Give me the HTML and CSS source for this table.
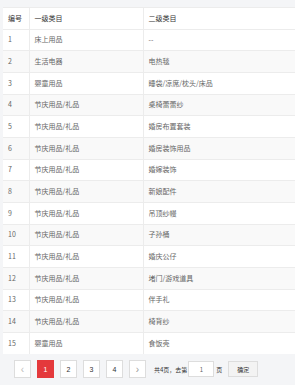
FILE: index.html
```html
<!DOCTYPE html>
<html lang="zh">
<head>
<meta charset="utf-8">
<link rel="stylesheet" href="styles.css">
</head>
<body>
<div class="page">
  <table class="grid">
    <colgroup><col class="c1"><col class="c2"><col class="c3"></colgroup>
    <thead>
      <tr><th>编号</th><th>一级类目</th><th>二级类目</th></tr>
    </thead>
    <tbody>
      <tr><td>1</td><td>床上用品</td><td>--</td></tr>
      <tr><td>2</td><td>生活电器</td><td>电热毯</td></tr>
      <tr><td>3</td><td>婴童用品</td><td>睡袋/凉席/枕头/床品</td></tr>
      <tr><td>4</td><td>节庆用品/礼品</td><td>桌椅蕾蕾纱</td></tr>
      <tr><td>5</td><td>节庆用品/礼品</td><td>婚房布置套装</td></tr>
      <tr><td>6</td><td>节庆用品/礼品</td><td>婚房装饰用品</td></tr>
      <tr><td>7</td><td>节庆用品/礼品</td><td>婚嫁装饰</td></tr>
      <tr><td>8</td><td>节庆用品/礼品</td><td>新娘配件</td></tr>
      <tr><td>9</td><td>节庆用品/礼品</td><td>吊顶纱幔</td></tr>
      <tr><td>10</td><td>节庆用品/礼品</td><td>子孙桶</td></tr>
      <tr><td>11</td><td>节庆用品/礼品</td><td>婚庆公仔</td></tr>
      <tr><td>12</td><td>节庆用品/礼品</td><td>堵门/游戏道具</td></tr>
      <tr><td>13</td><td>节庆用品/礼品</td><td>伴手礼</td></tr>
      <tr><td>14</td><td>节庆用品/礼品</td><td>椅背纱</td></tr>
      <tr><td>15</td><td>婴童用品</td><td>食饭壳</td></tr>
    </tbody>
  </table>
  <div class="pager">
    <span class="pbtn muted">&lsaquo;</span>
    <span class="pbtn active">1</span>
    <span class="pbtn">2</span>
    <span class="pbtn">3</span>
    <span class="pbtn">4</span>
    <span class="pbtn">&rsaquo;</span>
    <span class="ptext">共4页，去第</span>
    <span class="pinput">1</span>
    <span class="ptext">页</span>
    <span class="pok">确定</span>
  </div>
</div>
</body>
</html>
```
FILE: styles.css
```css
html, body {
  margin: 0;
  padding: 0;
  background: #f4f5f7;
  font-family: "Noto Sans CJK SC", "Noto Sans", sans-serif;
  font-size: 7px;
  color: #666;
}
.page {
  padding: 7px 0 0 3px;
  overflow: hidden;
}
.grid {
  border-collapse: collapse;
  width: 292px;
  table-layout: fixed;
  background: #fff;
}
.c1 { width: 26px; }
.c2 { width: 114px; }
.grid th, .grid td {
  height: 20.67px;
  padding: 0 5px;
  text-align: left;
  border-top: 1px solid #ececec;
  border-left: 1px solid #ececec;
  white-space: nowrap;
  line-height: 1;
}
.grid th:first-child, .grid td:first-child { border-left: none; }
.grid th {
  font-weight: normal;
  color: #333;
}
.grid tbody tr:nth-child(even) td { background: #f9f9f9; }
.pager {
  display: flex;
  align-items: center;
  height: 31px;
  padding-left: 11px;
  gap: 6px;
}
.pbtn {
  width: 15px;
  height: 16px;
  border: 1px solid #ddd;
  background: #fff;
  color: #333;
  display: flex;
  align-items: center;
  justify-content: center;
  font-size: 7px;
  font-family: "Liberation Sans", sans-serif;
}
.pbtn.muted { color: #bbb; font-size: 10px; }
.pbtn:nth-child(6) { font-size: 10px; color: #999; }
.pbtn.active {
  background: #e4393c;
  border-color: #e4393c;
  color: #fff;
}
.ptext {
  font-size: 6px;
  color: #333;
  margin-left: 2px;
}
.pinput {
  width: 24px;
  height: 14px;
  border: 1px solid #ddd;
  background: #fff;
  font-size: 6px;
  color: #666;
  display: flex;
  align-items: center;
  justify-content: center;
  margin-left: -5px;
}
.pinput + .ptext { margin-left: -4px; }
.pok {
  width: 28px;
  height: 14px;
  border: 1px solid #ddd;
  background: #f3f3f3;
  font-size: 6px;
  color: #333;
  display: flex;
  align-items: center;
  justify-content: center;
}
```
